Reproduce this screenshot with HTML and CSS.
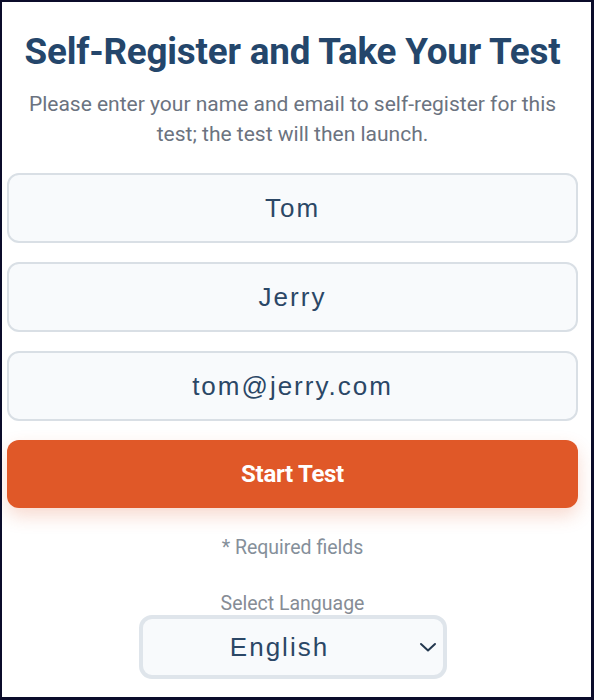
FILE: index.html
```html
<!DOCTYPE html>
<html lang="en">
<head>
<meta charset="utf-8">
<title>Self-Register and Take Your Test</title>
<link rel="stylesheet" href="styles.css">
</head>
<body>
<div class="frame">
  <main class="page">
    <h1 class="title">Self-Register and Take Your Test</h1>
    <p class="subtitle">Please enter your name and email to self-register for this test; the test will then launch.</p>
    <form class="form">
      <input class="field" type="text" value="Tom" aria-label="First name">
      <input class="field" type="text" value="Jerry" aria-label="Last name">
      <input class="field" type="email" value="tom@jerry.com" aria-label="Email">
      <button class="start" type="button">Start Test</button>
    </form>
    <p class="required">* Required fields</p>
    <div class="lang">
      <label class="lang-label" for="lang">Select Language</label>
      <div class="select-wrap">
        <select id="lang" class="select">
          <option>English</option>
        </select>
        <svg class="chevron" width="18" height="10" viewBox="0 0 18 10" aria-hidden="true">
          <path d="M2 2 L9 8.5 L16 2" fill="none" stroke="#24384f" stroke-width="2" stroke-linecap="round" stroke-linejoin="round"/>
        </svg>
      </div>
    </div>
  </main>
</div>
</body>
</html>
```

FILE: styles.css
```css
html, body {
  margin: 0;
  padding: 0;
  background: #ffffff;
}

.frame {
  box-sizing: border-box;
  width: 594px;
  height: 700px;
  border-style: solid;
  border-color: #0b0c2a;
  border-width: 2px 3px 3px 2px;
  overflow: hidden;
  background: #ffffff;
}

.page {
  padding: 0 13px 0 5px;
  display: flex;
  flex-direction: column;
  align-items: stretch;
  font-family: Roboto, "Liberation Sans", sans-serif;
}

.title {
  margin: 28px 0 0;
  font-size: 36.8px;
  line-height: 44px;
  font-weight: 700;
  color: #24466b;
  text-align: center;
  letter-spacing: -0.2px;
  white-space: nowrap;
}

.subtitle {
  margin: 15px 20px 0;
  font-size: 21px;
  line-height: 30px;
  color: #6b7380;
  text-align: center;
}

.form {
  margin-top: 24px;
  display: flex;
  flex-direction: column;
  gap: 19px;
}

.field {
  box-sizing: border-box;
  height: 70px;
  width: 100%;
  border: 2px solid #d9dfe5;
  border-radius: 12px;
  background: #f8fafc;
  font-family: "Liberation Sans", Arial, sans-serif;
  font-size: 26px;
  letter-spacing: 2px;
  color: #2b4766;
  text-align: center;
  padding: 0 12px;
  outline: none;
}

.start {
  height: 68px;
  border: none;
  border-radius: 12px;
  background: #e05828;
  color: #ffffff;
  font-family: Roboto, "Liberation Sans", sans-serif;
  font-size: 24px;
  font-weight: 700;
  letter-spacing: -0.3px;
  box-shadow: 0 8px 18px rgba(224, 88, 40, 0.22);
}

.required {
  margin: 28px 0 0;
  font-size: 19.5px;
  line-height: 24px;
  color: #858f9a;
  text-align: center;
}

.lang {
  margin-top: 33px;
  display: flex;
  flex-direction: column;
  align-items: center;
}

.lang-label {
  font-size: 19.5px;
  line-height: 22px;
  color: #868c95;
}

.select-wrap {
  position: relative;
  margin-top: 0;
  width: 308px;
  height: 64px;
}

.select {
  box-sizing: border-box;
  width: 100%;
  height: 100%;
  appearance: none;
  -webkit-appearance: none;
  border: 4px solid #dfe5eb;
  border-radius: 13px;
  background: #f8fafc;
  font-family: "Liberation Sans", Arial, sans-serif;
  font-size: 26px;
  letter-spacing: 2px;
  color: #2b4766;
  text-align: center;
  text-align-last: center;
  padding: 0 40px 0 14px;
  outline: none;
}

.chevron {
  position: absolute;
  right: 10px;
  top: 27px;
  pointer-events: none;
}
```
